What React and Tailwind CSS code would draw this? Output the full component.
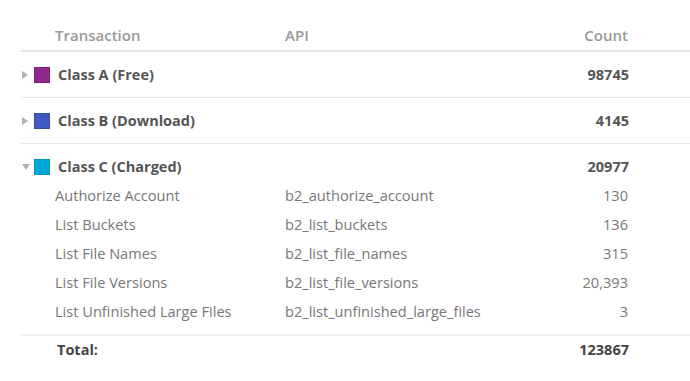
import React from 'react';

const classes = [
  { name: 'Class A (Free)', color: 'bg-[#8e2a8b] border-[#7a1f77]', count: '98745', open: false },
  { name: 'Class B (Download)', color: 'bg-[#4059c4] border-[#3449a8]', count: '4145', open: false },
];

const charged = [
  ['Authorize Account', 'b2_authorize_account', '130'],
  ['List Buckets', 'b2_list_buckets', '136'],
  ['List File Names', 'b2_list_file_names', '315'],
  ['List File Versions', 'b2_list_file_versions', '20,393'],
  ['List Unfinished Large Files', 'b2_list_unfinished_large_files', '3'],
];

function Caret({ open }) {
  return open ? (
    <span className="w-0 h-0 border-l-[4px] border-r-[4px] border-t-[6px] border-l-transparent border-r-transparent border-t-[#b0b0b0] ml-[1px] mr-[4px]" />
  ) : (
    <span className="w-0 h-0 border-t-[4px] border-b-[4px] border-l-[6px] border-t-transparent border-b-transparent border-l-[#b0b0b0] ml-[1px] mr-[6px]" />
  );
}

function ClassTitle({ name, color, count, open }) {
  return (
    <div className="grid grid-cols-[264px_1fr_auto] items-center h-5 text-[14.5px] font-bold text-[#555]">
      <div className="flex items-center">
        <Caret open={open} />
        <span className={`w-4 h-4 border ${color} mr-2`} />
        <span>{name}</span>
      </div>
      <div />
      <div className="text-right">{count}</div>
    </div>
  );
}

export default function App() {
  return (
    <div className="w-[690px] h-[381px] bg-white pl-[21px] text-[14.6px] leading-5" style={{ fontFamily: '"Open Sans", "Liberation Sans", sans-serif' }}>
      <div className="grid grid-cols-[264px_1fr_auto] h-[52px] pt-[25px] pr-[62px] border-b-2 border-[#e3e3e3] text-[15px] font-semibold text-[#999]">
        <div className="pl-[34px]">Transaction</div>
        <div>API</div>
        <div className="text-right">Count</div>
      </div>
      {classes.map((c) => (
        <div key={c.name} className="h-[46px] pt-[13px] pr-[61px] border-b border-[#e6e6e6]">
          <ClassTitle {...c} />
        </div>
      ))}
      <div className="pt-[13px] pb-[9px] pr-[61px] border-b-2 border-[#eeeeee]">
        <ClassTitle name="Class C (Charged)" color="bg-[#00a9d7] border-[#0096c0]" count="20977" open />
        <div className="mt-[3px] text-[#777] pr-[1px]">
          {charged.map(([label, api, n]) => (
            <div key={api} className="grid grid-cols-[264px_1fr_auto] items-center h-[29px]">
              <div className="pl-[34px]">{label}</div>
              <div>{api}</div>
              <div className="text-right">{n}</div>
            </div>
          ))}
        </div>
      </div>
      <div className="grid grid-cols-[264px_1fr_auto] pt-[4px] pr-[61px] text-[14.5px] font-bold text-[#444]">
        <div className="pl-[36px]">Total:</div>
        <div />
        <div className="text-right">123867</div>
      </div>
    </div>
  );
}
